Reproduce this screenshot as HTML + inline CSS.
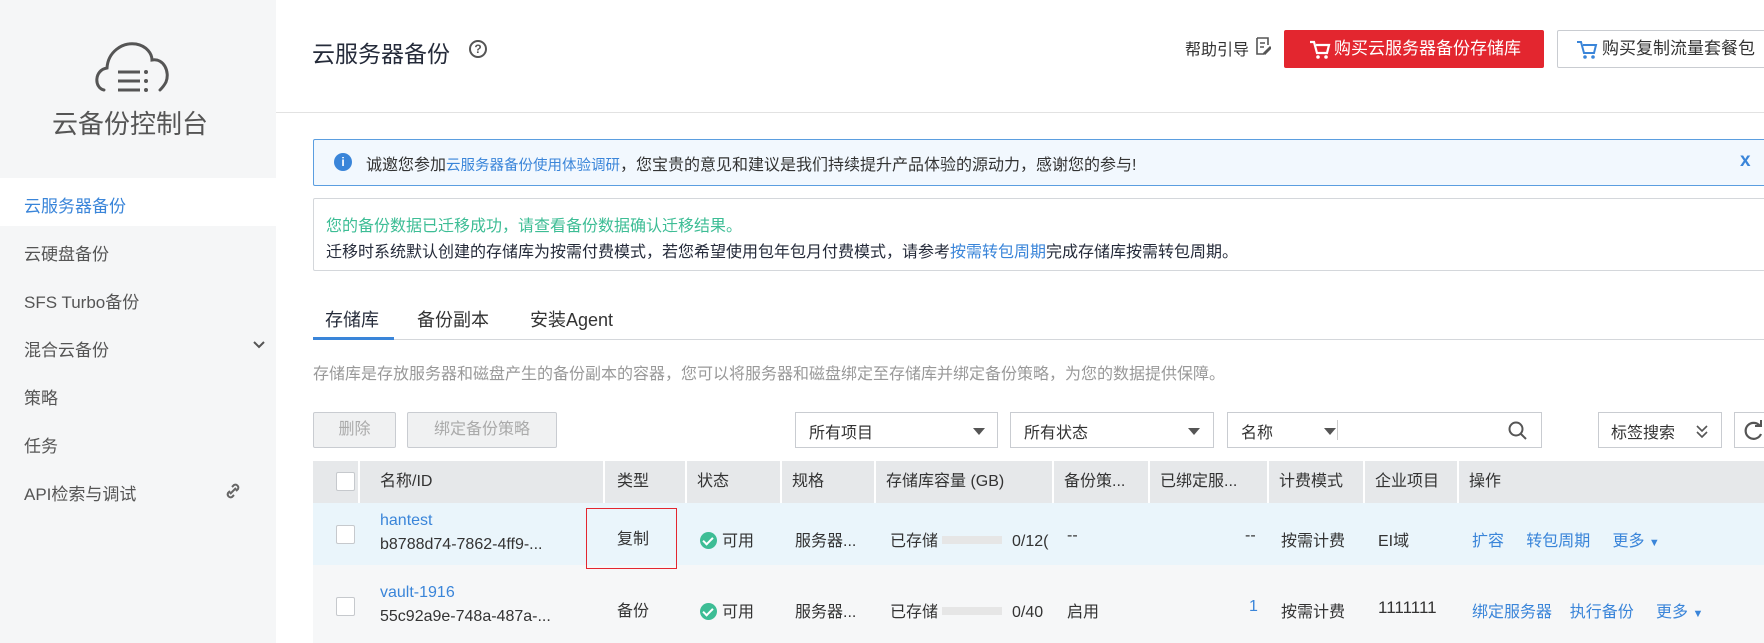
<!DOCTYPE html>
<html><head><meta charset="utf-8"><style>
*{box-sizing:border-box;margin:0;padding:0}
body{width:1764px;height:643px;overflow:hidden;background:#fff;font-family:"Liberation Sans","Noto Sans CJK SC",sans-serif;color:#252b3a;font-size:16px;position:relative}
.a{position:absolute;white-space:nowrap}
.side{position:absolute;left:0;top:0;width:276px;height:643px;background:#f5f6f7}
.mi{position:absolute;left:24px;font-size:17px;color:#555}
.blue,.cell.blue,.mi.blue{color:#3a85d9}
.btn{position:absolute;border:1px solid #c9ccd1;border-radius:2px;background:#fff;height:36px}
.sel{position:absolute;border:1px solid #c9ccd1;background:#fff;height:36px;top:412px}
.tri{position:absolute;width:0;height:0;border-left:6px solid transparent;border-right:6px solid transparent;border-top:7px solid #555}
.th{position:absolute;top:461px;height:42px;background:#e6e8ea;border-right:2px solid #fff;font-size:16px;line-height:42px;padding-left:10px;color:#333}
.cb{position:absolute;width:19px;height:19px;border:1px solid #c6c9cd;background:#fff;border-radius:2px}
.cell{position:absolute;font-size:16px;color:#333;white-space:nowrap}
.ok{display:inline-block;width:17px;height:17px;border-radius:50%;background:#3dbd95;vertical-align:-3px;margin-right:5px;position:relative}
.ok:after{content:"";position:absolute;left:5px;top:3px;width:4px;height:8px;border:solid #fff;border-width:0 2px 2px 0;transform:rotate(45deg)}
.bar{display:inline-block;width:60px;height:8px;background:#e6e6e6;vertical-align:2px;margin:0 10px 0 4px}
</style></head><body>
<div class="side"></div>
<svg class="a" style="left:92px;top:38px" width="80" height="58" viewBox="0 0 80 58"><path d="M12 52 C2 50 2 32 15 30 C16 14 30 4 44 6 C55 8 60 16 60 22 C72 20 78 34 74 44 C72 48 70 50 68 52" fill="none" stroke="#555" stroke-width="3" stroke-linecap="round"/><path d="M26 34h22M26 43h22M26 52h22" stroke="#555" stroke-width="3"/><circle cx="54" cy="34" r="2" fill="#555"/><circle cx="54" cy="43" r="2" fill="#555"/><circle cx="54" cy="52" r="2" fill="#555"/></svg>
<div class="a" style="left:52px;top:104px;font-size:26px;color:#555">云备份控制台</div>
<div class="a" style="left:0;top:178px;width:276px;height:48px;background:#fff"></div>
<div class="mi blue" style="top:192px">云服务器备份</div>
<div class="mi" style="top:240px">云硬盘备份</div>
<div class="mi" style="top:288px">SFS Turbo备份</div>
<div class="mi" style="top:336px">混合云备份</div>
<svg class="a" style="left:252px;top:340px" width="14" height="10"><path d="M2 2l5 5 5-5" fill="none" stroke="#555" stroke-width="2"/></svg>
<div class="mi" style="top:384px">策略</div>
<div class="mi" style="top:432px">任务</div>
<div class="mi" style="top:480px">API检索与调试</div>
<svg class="a" style="left:224px;top:482px" width="18" height="18" viewBox="0 0 18 18"><path d="M8 5l2-2a3 3 0 014 4l-2 2M10 13l-2 2a3 3 0 01-4-4l2-2M6 12l6-6" fill="none" stroke="#666" stroke-width="2"/></svg>

<div class="a" style="left:276px;top:112px;width:1488px;height:1px;background:#e2e2e2"></div>
<div class="a" style="left:312px;top:35px;font-size:23px;color:#252b3a">云服务器备份</div>
<div class="a" style="left:469px;top:40px;width:18px;height:18px;border:2px solid #555;border-radius:50%;font-size:12px;font-weight:bold;line-height:14px;text-align:center;color:#555">?</div>
<div class="a" style="left:1185px;top:36px;font-size:16px;color:#333">帮助引导</div>
<svg class="a" style="left:1255px;top:37px" width="16" height="18"><path d="M2 1h11v7M2 1v16h7" fill="none" stroke="#555" stroke-width="1.6"/><path d="M5 6h5M5 10h4M9 16l6-6 1 1-6 6z" fill="none" stroke="#555" stroke-width="1.5"/></svg>
<div class="a" style="left:1284px;top:30px;width:260px;height:38px;background:#e3262f;border-radius:2px;color:#fff;font-size:17px;line-height:38px;padding-left:50px">购买云服务器备份存储库</div>
<svg class="a" style="left:1309px;top:40px" width="22" height="20"><path d="M1 2h4l3 11h10l2-8H7" fill="none" stroke="#fff" stroke-width="2.2"/><circle cx="9" cy="17" r="1.8" fill="#fff"/><circle cx="17" cy="17" r="1.8" fill="#fff"/></svg>
<div class="btn" style="left:1557px;top:30px;width:220px;height:38px;font-size:17px;line-height:36px;padding-left:44px;color:#333">购买复制流量套餐包</div>
<svg class="a" style="left:1576px;top:40px" width="22" height="20"><path d="M1 2h4l3 11h10l2-8H7" fill="none" stroke="#3a85d9" stroke-width="2"/><circle cx="9" cy="17" r="1.8" fill="#3a85d9"/><circle cx="17" cy="17" r="1.8" fill="#3a85d9"/></svg>

<div class="a" style="left:313px;top:139px;width:1460px;height:47px;background:#f2f8fe;border:1px solid #5b9ee0;border-radius:2px"></div>
<div class="a" style="left:334px;top:153px;width:18px;height:18px;border-radius:50%;background:#3a85d9;color:#fff;font-size:12px;font-weight:bold;text-align:center;line-height:18px">i</div>
<div class="a" style="left:366px;top:151px;font-size:16px;color:#333">诚邀您参加<span class="blue" style="font-size:14.5px">云服务器备份使用体验调研</span>，您宝贵的意见和建议是我们持续提升产品体验的源动力，感谢您的参与!</div>
<div class="a" style="left:1740px;top:150px;font-size:19px;font-weight:bold;color:#3a85d9">x</div>
<div class="a" style="left:313px;top:198px;width:1460px;height:73px;border:1px solid #d4d7db;border-radius:2px"></div>
<div class="a" style="left:326px;top:212px;font-size:16px;color:#3dbd95">您的备份数据已迁移成功，请查看备份数据确认迁移结果。</div>
<div class="a" style="left:326px;top:238px;font-size:16px;color:#252b3a">迁移时系统默认创建的存储库为按需付费模式，若您希望使用包年包月付费模式，请参考<span class="blue">按需转包周期</span>完成存储库按需转包周期。</div>

<div class="a" style="left:325px;top:306px;font-size:18px;color:#252b3a">存储库</div>
<div class="a" style="left:417px;top:306px;font-size:18px;color:#333">备份副本</div>
<div class="a" style="left:530px;top:306px;font-size:18px;color:#333">安装Agent</div>
<div class="a" style="left:313px;top:339px;width:1460px;height:1px;background:#d4d7db"></div>
<div class="a" style="left:313px;top:337px;width:81px;height:3px;background:#3a85d9"></div>
<div class="a" style="left:313px;top:360px;font-size:16px;color:#999">存储库是存放服务器和磁盘产生的备份副本的容器，您可以将服务器和磁盘绑定至存储库并绑定备份策略，为您的数据提供保障。</div>

<div class="btn" style="left:313px;top:412px;width:83px;background:#f0f1f2;color:#aaa;text-align:center;line-height:34px">删除</div>
<div class="btn" style="left:407px;top:412px;width:150px;background:#f0f1f2;color:#aaa;text-align:center;line-height:34px">绑定备份策略</div>
<div class="sel" style="left:795px;width:203px"><span class="a" style="left:13px;top:6px;color:#333">所有项目</span><span class="tri" style="left:177px;top:15px"></span></div>
<div class="sel" style="left:1010px;width:204px"><span class="a" style="left:13px;top:6px;color:#333">所有状态</span><span class="tri" style="left:177px;top:15px"></span></div>
<div class="sel" style="left:1227px;width:315px"><span class="a" style="left:13px;top:6px;color:#333">名称</span><span class="tri" style="left:96px;top:15px"></span><span class="a" style="left:109px;top:7px;width:1px;height:20px;background:#ccc"></span><svg class="a" style="left:280px;top:8px" width="20" height="20"><circle cx="8" cy="8" r="6.5" fill="none" stroke="#555" stroke-width="2"/><path d="M13 13l5 5" stroke="#555" stroke-width="2"/></svg></div>
<div class="sel" style="left:1598px;width:124px"><span class="a" style="left:12px;top:6px;color:#333">标签搜索</span><svg class="a" style="left:96px;top:11px" width="14" height="16"><path d="M2 2l5 5 5-5M2 8l5 5 5-5" fill="none" stroke="#555" stroke-width="1.6"/></svg></div>
<div class="sel" style="left:1734px;width:50px"><svg class="a" style="left:8px;top:7px" width="22" height="22"><path d="M17 6A8 8 0 1 0 18 14" fill="none" stroke="#555" stroke-width="2.2"/><path d="M12 6h6V0" fill="none" stroke="#555" stroke-width="2"/></svg></div>

<div class="th" style="left:313px;width:47px"></div>
<div class="cb" style="left:336px;top:472px"></div>
<div class="th" style="left:360px;width:245px;padding-left:20px">名称/ID</div>
<div class="th" style="left:605px;width:82px;padding-left:12px">类型</div>
<div class="th" style="left:687px;width:95px">状态</div>
<div class="th" style="left:782px;width:94px">规格</div>
<div class="th" style="left:876px;width:178px">存储库容量 (GB)</div>
<div class="th" style="left:1054px;width:96px">备份策...</div>
<div class="th" style="left:1150px;width:119px">已绑定服...</div>
<div class="th" style="left:1269px;width:96px">计费模式</div>
<div class="th" style="left:1365px;width:94px">企业项目</div>
<div class="th" style="left:1459px;width:310px;border-right:0">操作</div>

<div class="a" style="left:313px;top:503px;width:1460px;height:62px;background:#eaf5fb"></div>
<div class="a" style="left:313px;top:565px;width:1460px;height:78px;background:#f6f7f8"></div>
<div class="cb" style="left:336px;top:525px"></div>
<div class="cb" style="left:336px;top:597px"></div>
<div class="cell blue" style="left:380px;top:512px">hantest</div>
<div class="cell" style="left:380px;top:536px">b8788d74-7862-4ff9-...</div>
<div class="cell blue" style="left:380px;top:584px">vault-1916</div>
<div class="cell" style="left:380px;top:608px">55c92a9e-748a-487a-...</div>
<div class="a" style="left:586px;top:508px;width:91px;height:61px;border:1px solid #e3262f"></div>
<div class="cell" style="left:617px;top:525px">复制</div>
<div class="cell" style="left:617px;top:597px">备份</div>
<div class="cell" style="left:700px;top:527px"><span class="ok"></span>可用</div>
<div class="cell" style="left:700px;top:598px"><span class="ok"></span>可用</div>
<div class="cell" style="left:795px;top:527px">服务器...</div>
<div class="cell" style="left:795px;top:598px">服务器...</div>
<div class="cell" style="left:890px;top:527px">已存储<span class="bar"></span>0/12(</div>
<div class="cell" style="left:890px;top:598px">已存储<span class="bar"></span>0/40</div>
<div class="cell" style="left:1067px;top:527px">--</div>
<div class="cell" style="left:1067px;top:598px">启用</div>
<div class="cell" style="left:1245px;top:527px">--</div>
<div class="cell blue" style="left:1249px;top:598px">1</div>
<div class="cell" style="left:1281px;top:527px">按需计费</div>
<div class="cell" style="left:1281px;top:598px">按需计费</div>
<div class="cell" style="left:1378px;top:527px">EI域</div>
<div class="cell" style="left:1378px;top:598px;font-size:17px">1111111</div>
<div class="cell blue" style="left:1472px;top:527px">扩容&nbsp;&nbsp;&nbsp;&nbsp;&nbsp;转包周期&nbsp;&nbsp;&nbsp;&nbsp;&nbsp;更多 <span style="font-size:11px">▼</span></div>
<div class="cell blue" style="left:1472px;top:598px">绑定服务器&nbsp;&nbsp;&nbsp;&nbsp;执行备份&nbsp;&nbsp;&nbsp;&nbsp;&nbsp;更多 <span style="font-size:11px">▼</span></div>
</body></html>
